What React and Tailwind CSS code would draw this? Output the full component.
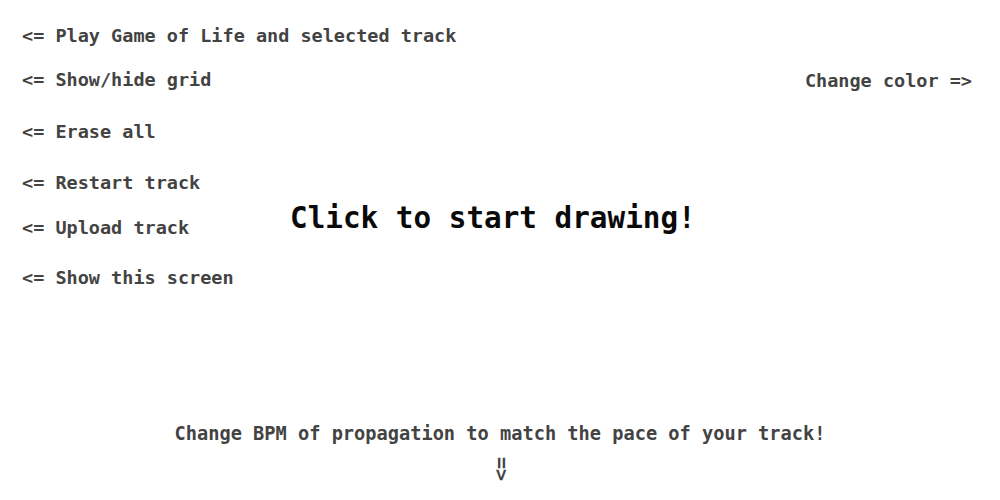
import React from 'react'

const MENU = [
  { label: 'Play Game of Life and selected track', mt: 'mt-[24px]' },
  { label: 'Show/hide grid', mt: 'mt-[20px]' },
  { label: 'Erase all', mt: 'mt-[28px]' },
  { label: 'Restart track', mt: 'mt-[27px]' },
  { label: 'Upload track', mt: 'mt-[21px]' },
  { label: 'Show this screen', mt: 'mt-[26px]' },
]

const mono = "font-['DejaVu_Sans_Mono','Liberation_Mono',monospace]"

export default function App() {
  return (
    <div className={`w-[1000px] h-[500px] bg-white flex flex-col overflow-hidden ${mono}`}>
      <div className="flex">
        {/* Left hints */}
        <div className="w-[290px] pl-[22px] flex flex-col shrink-0">
          {MENU.map(({ label, mt }) => (
            <div key={label} className={`${mt} h-[24px] leading-[24px] text-[18.5px] font-bold text-[#434343] whitespace-nowrap`}>
              {'<= '}{label}
            </div>
          ))}
        </div>

        {/* Center title */}
        <div className="flex-1 pt-[200px]">
          <h1 className="h-[36px] leading-[36px] text-[29.3px] font-bold text-[#0a0a0a] whitespace-nowrap">
            Click to start drawing!
          </h1>
        </div>

        {/* Right hint */}
        <div className="pr-[28px] pt-[69px]">
          <div className="h-[24px] leading-[24px] text-[18.5px] font-bold text-[#434343] whitespace-nowrap">
            {'Change color =>'}
          </div>
        </div>
      </div>

      {/* Bottom hint */}
      <div className="mt-auto pb-[19px] flex flex-col items-center">
        <p className="h-[24px] leading-[24px] text-[18.65px] font-bold text-[#434343] whitespace-nowrap">
          Change BPM of propagation to match the pace of your track!
        </p>
        <div className="mt-[11px] h-[24px] w-[24px] flex items-center justify-center ml-[5px]">
          <span className="block rotate-90 text-[20px] leading-none font-bold text-[#434343]">{'=>'}</span>
        </div>
      </div>
    </div>
  )
}
